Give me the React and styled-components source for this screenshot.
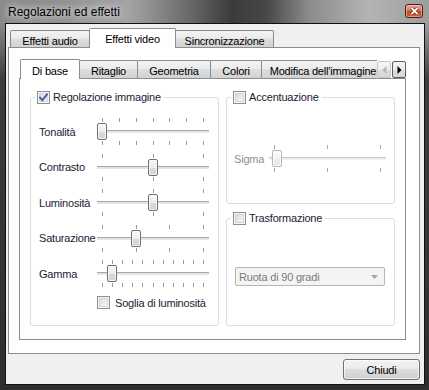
import React from "react";
import styled, { createGlobalStyle } from "styled-components";

const GlobalStyle = createGlobalStyle`
  html, body {
    margin: 0;
    padding: 0;
    background: #ffffff;
  }
  body {
    font-family: "Liberation Sans", Arial, sans-serif;
    font-size: 11px;
    letter-spacing: -0.2px;
  }
`;

const Window = styled.div`
  width: 429px;
  height: 390px;
  box-sizing: border-box;
  display: flex;
  flex-direction: column;
  background:
    linear-gradient(180deg, rgba(46, 46, 46, 0) 0, rgba(46, 46, 46, 0) 22px, rgba(46, 46, 46, 0.85) 80px, #2e2e2e 100%),
    linear-gradient(90deg, #8a8a8a 0%, #909090 14%, #a4a4a4 30%, #6a6a6a 44%, #3b3b3b 54%, #474747 62%, #8b8b8b 72%, #b4b4b4 86%, #9d9d9d 100%);
`;

const TitleBar = styled.div`
  height: 23px;
  flex-shrink: 0;
  display: flex;
  align-items: center;
  justify-content: space-between;
  padding: 0 6px 0 8px;
`;

const Title = styled.span`
  font-size: 12px;
  letter-spacing: 0;
  color: #000;
  text-shadow: 0 0 6px rgba(255, 255, 255, 0.9), 0 0 12px rgba(255, 255, 255, 0.7);
`;

const CloseButton = styled.div`
  width: 18px;
  height: 14px;
  margin-top: -2px;
  box-sizing: border-box;
  border: 1px solid #4a1d15;
  border-radius: 3px;
  background: linear-gradient(180deg, #e9a898 0%, #d77a62 45%, #c4462c 52%, #d2643f 100%);
  box-shadow: inset 0 0 0 1px rgba(255, 220, 210, 0.45);
  display: flex;
  align-items: center;
  justify-content: center;
`;

const ClientFrame = styled.div`
  flex: 1;
  margin: 0 4px 5px 5px;
  border: 1px solid #111;
  background: #f0f0f0;
  display: flex;
  flex-direction: column;
  padding: 4px 4px 0 2px;
  min-height: 0;
`;

const TabWidget = styled.div`
  flex: 1;
  display: flex;
  flex-direction: column;
  min-height: 0;
`;

const TabHeader = styled.div`
  height: 20px;
  flex-shrink: 0;
  display: flex;
  align-items: flex-end;
  margin-bottom: -1px;
  position: relative;
  z-index: 1;
  padding-left: ${p => p.$inset}px;
`;

const TabStrip = styled.div`
  flex: 1;
  min-width: 0;
  height: 100%;
  display: flex;
  align-items: flex-end;
  overflow: hidden;
`;

const Tab = styled.div`
  position: relative;
  flex-shrink: 0;
  width: ${p => p.$w}px;
  height: ${p => (p.$active ? 20 : p.$h)}px;
  margin-bottom: ${p => (p.$active ? 0 : 1)}px;
  box-sizing: border-box;
  border: 1px solid #898c95;
  border-bottom: none;
  border-radius: 2px 2px 0 0;
  background: ${p =>
    p.$active
      ? "#ffffff"
      : "linear-gradient(180deg, #f3f3f3 0%, #ebebeb 45%, #dedede 50%, #d2d2d2 100%)"};
  z-index: ${p => (p.$active ? 2 : 1)};
  display: flex;
  justify-content: center;
  align-items: center;
  padding-top: ${p => p.$pad}px;
  white-space: nowrap;
  color: #000;
  & + & {
    margin-left: -1px;
  }
`;

const ScrollButtons = styled.div`
  display: flex;
  gap: 1px;
  margin-bottom: 1px;
  flex-shrink: 0;
`;

const ScrollButton = styled.div`
  width: 14px;
  height: 17px;
  box-sizing: border-box;
  border: 1px solid ${p => (p.$disabled ? "#c6c6c6" : "#5e5e5e")};
  border-radius: 2px;
  background: linear-gradient(180deg, #f6f6f6 0%, #ececec 50%, #dfdfdf 51%, #d6d6d6 100%);
  display: flex;
  align-items: center;
  justify-content: center;
`;

const Pane = styled.div`
  flex: 1;
  min-height: 0;
  border: 1px solid #898c95;
  background: #ffffff;
  display: flex;
  flex-direction: ${p => p.$dir || "column"};
  gap: 7px;
  padding: ${p => p.$pad};
`;

const Column = styled.div`
  display: flex;
  flex-direction: column;
  gap: 7px;
  width: 169px;
`;

const Group = styled.fieldset`
  margin: 0;
  padding: 0;
  min-width: 0;
  box-sizing: border-box;
  border: 1px solid #d5dfe5;
  border-radius: 3px;
  width: ${p => p.$w}px;
  height: ${p => (p.$h ? `${p.$h}px` : "auto")};
  flex: ${p => (p.$grow ? 1 : "none")};
`;

const Legend = styled.legend`
  margin-left: 4px;
  padding: 0 3px 0 2px;
  height: 14px;
  display: flex;
  align-items: center;
  gap: 3px;
  white-space: nowrap;
  color: #1a2134;
`;

const GroupBody = styled.div`
  padding: ${p => p.$pad};
  display: flex;
  flex-direction: column;
`;

const Box = styled.span`
  flex-shrink: 0;
  width: 13px;
  height: 13px;
  box-sizing: border-box;
  border: 1px solid #8e8f8f;
  background: linear-gradient(135deg, #ccd1d7 0%, #e9ecef 55%, #fafafa 100%);
  box-shadow: inset 0 0 0 1px #f6f6f6, inset 0 0 0 2px #d3d7dc;
  display: flex;
  align-items: center;
  justify-content: center;
`;

const CheckRow = styled.div`
  display: flex;
  align-items: center;
  gap: 5px;
  height: 13px;
  margin: 4.5px 0 0 58px;
  white-space: nowrap;
  color: #1a2134;
`;

const SliderRow = styled.div`
  display: flex;
  align-items: center;
  height: 35.5px;
  flex-shrink: 0;
`;

const RowLabel = styled.span`
  width: ${p => p.$w}px;
  flex-shrink: 0;
  white-space: nowrap;
  color: ${p => (p.$disabled ? "#8a8f98" : "#1a2134")};
`;

const SliderBox = styled.div`
  position: relative;
  width: ${p => p.$w}px;
  height: 27px;
  flex-shrink: 0;
`;

const Track = styled.div`
  position: absolute;
  left: 0;
  right: 0;
  top: 12px;
  height: 2px;
  border-top: 1px solid ${p => (p.$disabled ? "#c4c4c4" : "#a7a7a7")};
  background: ${p => (p.$disabled ? "#eeeeee" : "#e4e4e4")};
`;

const Tick = styled.span`
  position: absolute;
  width: 1px;
  height: 4px;
  background: ${p => (p.$disabled ? "#a9a9a9" : "#9b9b9b")};
  top: ${p => (p.$bottom ? 23 : 0)}px;
`;

const Thumb = styled.span`
  position: absolute;
  top: 5px;
  width: 10px;
  height: 17px;
  box-sizing: border-box;
  border: 1px solid ${p => (p.$disabled ? "#b9b9b9" : "#707070")};
  border-radius: 2px;
  background: ${p =>
    p.$disabled
      ? "linear-gradient(180deg, #fbfbfb 0%, #f4f4f4 50%, #ededed 51%, #e8e8e8 100%)"
      : "linear-gradient(180deg, #f7f7f7 0%, #ececec 50%, #dcdcdc 51%, #d2d2d2 100%)"};
  box-shadow: inset 0 0 0 1px rgba(255, 255, 255, 0.7);
`;

const Combo = styled.div`
  width: 150px;
  height: 19px;
  box-sizing: border-box;
  border: 1px solid #b3b7ba;
  border-radius: 2px;
  background: #f4f4f4;
  display: flex;
  align-items: center;
  justify-content: space-between;
  padding: 0 6px 0 3px;
  color: #7a7a7a;
`;

const Footer = styled.div`
  flex-shrink: 0;
  display: flex;
  justify-content: flex-end;
  padding: 5px 0 4px;
`;

const Button = styled.div`
  width: 77px;
  height: 21px;
  box-sizing: border-box;
  border: 1px solid #707070;
  border-radius: 3px;
  background: linear-gradient(180deg, #f3f3f3 0%, #ebebeb 45%, #dddddd 50%, #cfcfcf 100%);
  box-shadow: inset 0 0 0 1px rgba(255, 255, 255, 0.65);
  display: flex;
  align-items: center;
  justify-content: center;
  color: #000;
`;

const CheckBox = ({ checked }) => (
  <Box>
    {checked && (
      <svg width="9" height="9" viewBox="0 0 9 9">
        <path d="M1 4.6 L3.4 7.2 L8 1.4" fill="none" stroke="#4a5e9c" strokeWidth="1.9" strokeLinecap="square" />
      </svg>
    )}
  </Box>
);

const Slider = ({ width, ticks, value, disabled }) => {
  const span = width - 11;
  const marks = Array.from({ length: ticks }, (_, i) => 5 + Math.round((i * span) / (ticks - 1)));
  const pos = 5 + Math.round(value * span);
  return (
    <SliderBox $w={width}>
      <Track $disabled={disabled} />
      {marks.map(x => (
        <React.Fragment key={x}>
          <Tick $disabled={disabled} style={{ left: x }} />
          <Tick $disabled={disabled} $bottom style={{ left: x }} />
        </React.Fragment>
      ))}
      <Thumb $disabled={disabled} style={{ left: pos - 5 }} />
    </SliderBox>
  );
};

const adjustments = [
  { label: "Tonalità", ticks: 7, value: 0 },
  { label: "Contrasto", ticks: 3, value: 0.5 },
  { label: "Luminosità", ticks: 3, value: 0.5 },
  { label: "Saturazione", ticks: 4, value: 0.34 },
  { label: "Gamma", ticks: 11, value: 0.1 }
];

const App = () => {
  return (
    <Window>
      <GlobalStyle />
      <TitleBar>
        <Title>Regolazioni ed effetti</Title>
        <CloseButton>
          <svg width="9" height="8" viewBox="0 0 9 8">
            <path d="M1.5 1 L7.5 7 M7.5 1 L1.5 7" stroke="#5a2317" strokeWidth="3.2" />
            <path d="M1.5 1 L7.5 7 M7.5 1 L1.5 7" stroke="#ffffff" strokeWidth="1.8" />
          </svg>
        </CloseButton>
      </TitleBar>
      <ClientFrame>
        <TabWidget>
          <TabHeader $inset={2}>
            <Tab $w={80} $h={17} $pad={3}>Effetti audio</Tab>
            <Tab $w={87} $active $pad={0}>Effetti video</Tab>
            <Tab $w={99} $h={17} $pad={3}>Sincronizzazione</Tab>
          </TabHeader>
          <Pane $pad="11px 13px 13px 10px">
            <TabWidget>
              <TabHeader $inset={1}>
                <TabStrip>
                  <Tab $w={60} $active $pad={2}>Di base</Tab>
                  <Tab $w={59} $h={18} $pad={2}>Ritaglio</Tab>
                  <Tab $w={74} $h={18} $pad={2}>Geometria</Tab>
                  <Tab $w={52} $h={18} $pad={2}>Colori</Tab>
                  <Tab $w={124} $h={18} $pad={2}>Modifica dell'immagine</Tab>
                </TabStrip>
                <ScrollButtons>
                  <ScrollButton $disabled>
                    <svg width="5" height="8" viewBox="0 0 5 8">
                      <path d="M4.5 0 L0.5 4 L4.5 8 Z" fill="#b4b4b4" />
                    </svg>
                  </ScrollButton>
                  <ScrollButton>
                    <svg width="5" height="8" viewBox="0 0 5 8">
                      <path d="M0.5 0 L4.5 4 L0.5 8 Z" fill="#000000" />
                    </svg>
                  </ScrollButton>
                </ScrollButtons>
              </TabHeader>
              <Pane $dir="row" $pad="11px 10px 13px 10px">
                <Group $w={189}>
                  <Legend>
                    <CheckBox checked />
                    Regolazione immagine
                  </Legend>
                  <GroupBody $pad="10px 9px 0 8px">
                    {adjustments.map(a => (
                      <SliderRow key={a.label}>
                        <RowLabel $w={58}>{a.label}</RowLabel>
                        <Slider width={112} ticks={a.ticks} value={a.value} />
                      </SliderRow>
                    ))}
                    <CheckRow>
                      <CheckBox />
                      Soglia di luminosità
                    </CheckRow>
                  </GroupBody>
                </Group>
                <Column>
                  <Group $w={169} $h={114}>
                    <Legend>
                      <CheckBox />
                      Accentuazione
                    </Legend>
                    <GroupBody $pad="37px 8px 0 7px">
                      <SliderRow>
                        <RowLabel $w={35} $disabled>Sigma</RowLabel>
                        <Slider width={117} ticks={3} value={0.03} disabled />
                      </SliderRow>
                    </GroupBody>
                  </Group>
                  <Group $w={169} $grow>
                    <Legend>
                      <CheckBox />
                      Trasformazione
                    </Legend>
                    <GroupBody $pad="42px 9px 0 8px">
                      <Combo>
                        Ruota di 90 gradi
                        <svg width="7" height="4" viewBox="0 0 7 4">
                          <path d="M0 0 L7 0 L3.5 4 Z" fill="#a3a3a3" />
                        </svg>
                      </Combo>
                    </GroupBody>
                  </Group>
                </Column>
              </Pane>
            </TabWidget>
          </Pane>
        </TabWidget>
        <Footer>
          <Button>Chiudi</Button>
        </Footer>
      </ClientFrame>
    </Window>
  );
};

export default App;
